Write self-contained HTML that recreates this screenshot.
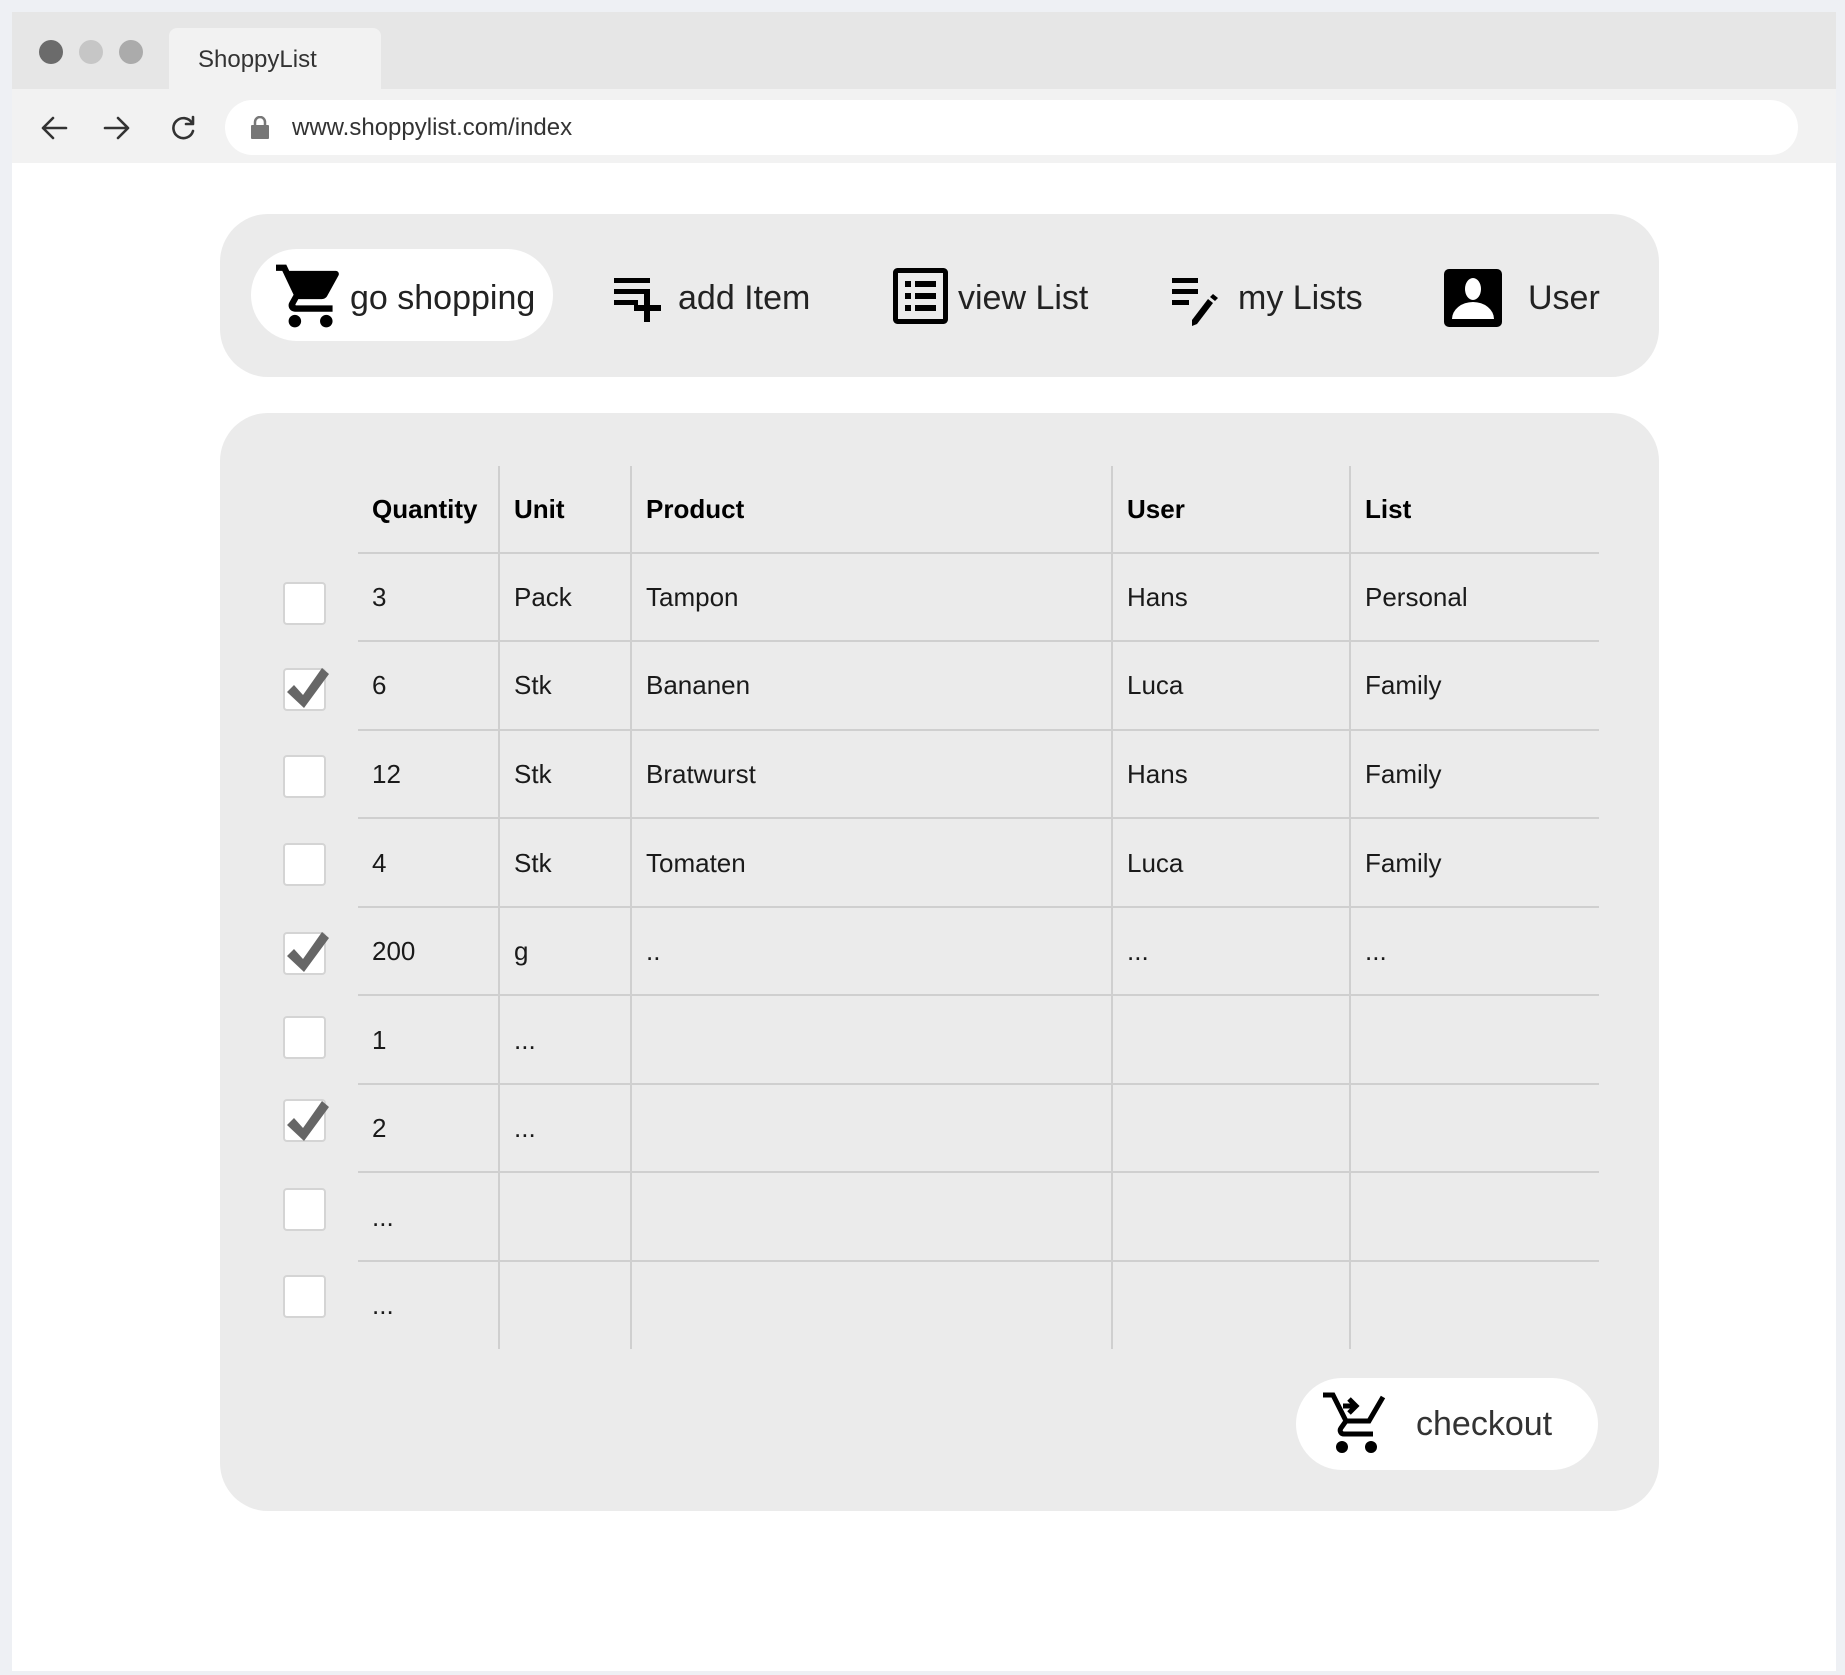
<!DOCTYPE html>
<html><head><meta charset="utf-8"><style>
*{margin:0;padding:0;box-sizing:border-box}
body{width:1845px;height:1675px;background:#eef0f4;font-family:"Liberation Sans",Arial,sans-serif;position:relative;overflow:hidden}
.abs{position:absolute}
.win{left:12px;top:12px;width:1824px;height:1659px;background:#fff}
.tabbar{left:12px;top:12px;width:1824px;height:77px;background:#e6e6e6}
.tab{left:169px;top:28px;width:212px;height:61px;background:#f2f2f2;border-radius:8px 8px 0 0;font-size:24px;color:#333;padding:18px 0 0 29px}
.tool{left:12px;top:89px;width:1824px;height:74px;background:#f2f2f2}
.url{left:225px;top:100px;width:1573px;height:55px;background:#fff;border-radius:28px;font-size:24px;color:#333;padding:14px 0 0 67px}
.dot{width:24px;height:24px;border-radius:50%;top:40px}
.nav{left:220px;top:214px;width:1439px;height:163px;background:#ebebeb;border-radius:48px}
.pill{background:#fff;border-radius:46px}
.nt{font-size:34px;color:#222;top:277px;line-height:42px}
.panel{left:220px;top:413px;width:1439px;height:1098px;background:#ebebeb;border-radius:48px}
.hl{height:2px;background:#cfcfcf;left:358px;width:1241px}
.vl{width:2px;background:#cfcfcf;top:466px;height:883px}
.c{font-size:26px;color:#1a1a1a;line-height:30px}
.h{font-weight:bold;color:#000}
.cb{width:43px;height:43px;background:#fff;border:2px solid #d4d4d4;border-radius:4px;left:283px}
</style></head><body>
<div class="abs win"></div>
<div class="abs tabbar"></div>
<div class="abs dot" style="left:39px;background:#6b6b6b"></div>
<div class="abs dot" style="left:79px;background:#c6c6c6"></div>
<div class="abs dot" style="left:119px;background:#ababab"></div>
<div class="abs tab">ShoppyList</div>
<div class="abs tool"></div>
<svg class="abs" style="left:40px;top:114px" width="160" height="30" viewBox="0 0 160 30">
<g fill="none" stroke="#333" stroke-width="2.6" stroke-linecap="round" stroke-linejoin="round">
<path d="M26 14H3M13 4L3 14l10 10"/>
<path d="M65 14h23M78 4l10 10-10 10"/>
<path d="M152 9a10 10 0 1 0 1 8"/><path d="M153 3v7h-7"/>
</g></svg>
<div class="abs url">www.shoppylist.com/index</div>
<svg class="abs" style="left:250px;top:116px" width="20" height="24" viewBox="0 0 20 24"><rect x="1" y="9" width="18" height="14" rx="1" fill="#777"/><path d="M5 10V6a5 5 0 0 1 10 0v4" fill="none" stroke="#777" stroke-width="2.5"/></svg>

<div class="abs nav"></div>
<div class="abs pill" style="left:251px;top:249px;width:302px;height:92px"></div>
<svg class="abs" style="left:276px;top:263px" width="66" height="66" viewBox="1 1.5 21 21"><path d="M7 18c-1.1 0-1.99.9-1.99 2S5.9 22 7 22s2-.9 2-2-.9-2-2-2zM1 2v2h2l3.6 7.59-1.35 2.45c-.16.28-.25.61-.25.96 0 1.1.9 2 2 2h12v-2H7.42c-.14 0-.25-.11-.25-.25l.03-.12.9-1.63h7.45c.75 0 1.41-.41 1.75-1.03l3.58-6.49A1.003 1.003 0 0020 4H5.21l-.94-2H1zm16 16c-1.1 0-1.99.9-1.99 2s.89 2 1.99 2 2-.9 2-2-.9-2-2-2z"/></svg>
<div class="abs nt" style="left:350px">go shopping</div>
<svg class="abs" style="left:614px;top:276px" width="62" height="50" viewBox="0 0 62 50"><g fill="#000"><rect x="0" y="2" width="36" height="5"/><rect x="0" y="13" width="36" height="5"/><rect x="0" y="24" width="24" height="5"/><rect x="30" y="18" width="6" height="28"/><rect x="20" y="29" width="27" height="6"/></g></svg>
<div class="abs nt" style="left:678px">add Item</div>
<svg class="abs" style="left:893px;top:268px" width="55" height="56" viewBox="0 0 55 56"><rect x="2.5" y="2.5" width="50" height="51" rx="2" fill="none" stroke="#000" stroke-width="5"/><g fill="#000"><rect x="12" y="13" width="6" height="6"/><rect x="12" y="25" width="6" height="6"/><rect x="12" y="37" width="6" height="6"/><rect x="22" y="13" width="21" height="6"/><rect x="22" y="25" width="21" height="6"/><rect x="22" y="37" width="21" height="6"/></g></svg>
<div class="abs nt" style="left:958px">view List</div>
<svg class="abs" style="left:1172px;top:276px" width="60" height="50" viewBox="0 0 60 50"><g fill="#000"><rect x="0" y="2" width="26" height="5"/><rect x="0" y="13" width="26" height="5"/><rect x="0" y="24" width="17" height="5"/><path d="M20 50l0-6 16-21 5 4-16 21z"/><path d="M38 21l3-3 5 4-3 3z"/></g></svg>
<div class="abs nt" style="left:1238px">my Lists</div>
<svg class="abs" style="left:1444px;top:269px" width="58" height="58" viewBox="0 0 58 58"><rect x="0" y="0" width="58" height="58" rx="5"/><ellipse cx="29" cy="20" rx="8" ry="11" fill="#fff"/><path d="M8 50a21 17 0 0 1 42 0z" fill="#fff"/></svg>
<div class="abs nt" style="left:1528px">User</div>

<div class="abs panel"></div>
<div class="abs hl" style="top:552px"></div>
<div class="abs hl" style="top:640px"></div>
<div class="abs hl" style="top:729px"></div>
<div class="abs hl" style="top:817px"></div>
<div class="abs hl" style="top:906px"></div>
<div class="abs hl" style="top:994px"></div>
<div class="abs hl" style="top:1083px"></div>
<div class="abs hl" style="top:1171px"></div>
<div class="abs hl" style="top:1260px"></div>
<div class="abs vl" style="left:498px"></div>
<div class="abs vl" style="left:630px"></div>
<div class="abs vl" style="left:1111px"></div>
<div class="abs vl" style="left:1349px"></div>

<div class="abs c h" style="left:372px;top:494px">Quantity</div>
<div class="abs c h" style="left:514px;top:494px">Unit</div>
<div class="abs c h" style="left:646px;top:494px">Product</div>
<div class="abs c h" style="left:1127px;top:494px">User</div>
<div class="abs c h" style="left:1365px;top:494px">List</div>

<div class="abs cb" style="top:582px"></div>
<div class="abs c" style="left:372px;top:582px">3</div><div class="abs c" style="left:514px;top:582px">Pack</div><div class="abs c" style="left:646px;top:582px">Tampon</div><div class="abs c" style="left:1127px;top:582px">Hans</div><div class="abs c" style="left:1365px;top:582px">Personal</div>

<div class="abs cb" style="top:668px"></div>
<div class="abs c" style="left:372px;top:670px">6</div><div class="abs c" style="left:514px;top:670px">Stk</div><div class="abs c" style="left:646px;top:670px">Bananen</div><div class="abs c" style="left:1127px;top:670px">Luca</div><div class="abs c" style="left:1365px;top:670px">Family</div>

<div class="abs cb" style="top:755px"></div>
<div class="abs c" style="left:372px;top:759px">12</div><div class="abs c" style="left:514px;top:759px">Stk</div><div class="abs c" style="left:646px;top:759px">Bratwurst</div><div class="abs c" style="left:1127px;top:759px">Hans</div><div class="abs c" style="left:1365px;top:759px">Family</div>

<div class="abs cb" style="top:843px"></div>
<div class="abs c" style="left:372px;top:848px">4</div><div class="abs c" style="left:514px;top:848px">Stk</div><div class="abs c" style="left:646px;top:848px">Tomaten</div><div class="abs c" style="left:1127px;top:848px">Luca</div><div class="abs c" style="left:1365px;top:848px">Family</div>

<div class="abs cb" style="top:932px"></div>
<div class="abs c" style="left:372px;top:936px">200</div><div class="abs c" style="left:514px;top:936px">g</div><div class="abs c" style="left:646px;top:936px">..</div><div class="abs c" style="left:1127px;top:936px">...</div><div class="abs c" style="left:1365px;top:936px">...</div>

<div class="abs cb" style="top:1016px"></div>
<div class="abs c" style="left:372px;top:1025px">1</div><div class="abs c" style="left:514px;top:1025px">...</div>

<div class="abs cb" style="top:1099px"></div>
<div class="abs c" style="left:372px;top:1113px">2</div><div class="abs c" style="left:514px;top:1113px">...</div>

<div class="abs cb" style="top:1188px"></div>
<div class="abs c" style="left:372px;top:1202px">...</div>

<div class="abs cb" style="top:1275px"></div>
<div class="abs c" style="left:372px;top:1290px">...</div>

<svg class="abs" style="left:284px;top:664px" width="48" height="48" viewBox="0 0 48 48"><path d="M3 28l7-7 9 10L38 4l7 6-25 34z" fill="#666"/></svg>
<svg class="abs" style="left:284px;top:928px" width="48" height="48" viewBox="0 0 48 48"><path d="M3 28l7-7 9 10L38 4l7 6-25 34z" fill="#666"/></svg>
<svg class="abs" style="left:284px;top:1097px" width="48" height="48" viewBox="0 0 48 48"><path d="M3 28l7-7 9 10L38 4l7 6-25 34z" fill="#666"/></svg>

<div class="abs pill" style="left:1296px;top:1378px;width:302px;height:92px"></div>
<svg class="abs" style="left:1322px;top:1392px" width="66" height="66" viewBox="0 0 66 66"><g fill="none" stroke="#000" stroke-width="5"><path d="M1 3h10l13 26h23l14-24"/><path d="M24 29l-5 7c-2 3 0 6 3 6h29"/><path d="M21 14h11M27 7l7 7-7 7"/></g><circle cx="20" cy="55" r="6"/><circle cx="49" cy="55" r="6"/></svg>
<div class="abs nt" style="left:1416px;top:1403px;color:#333">checkout</div>
</body></html>
